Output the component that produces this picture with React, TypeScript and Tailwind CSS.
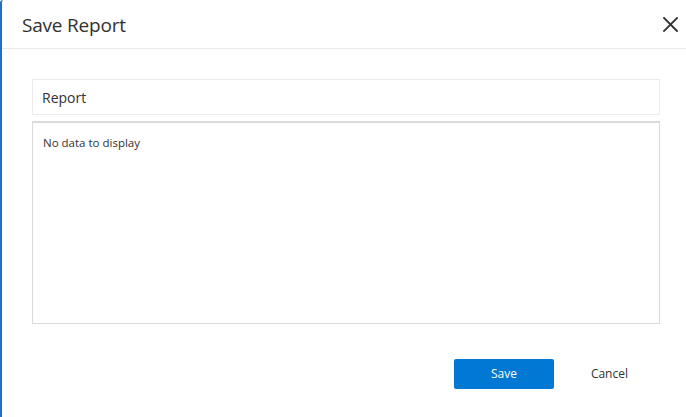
import React from 'react';

const font = { fontFamily: '"Open Sans", "Noto Sans", Arial, sans-serif' };

export default function App() {
  return (
    <div
      className="w-[686px] h-[417px] bg-white border-l-2 border-[#1f6fc4] rounded-tl-[3px] flex flex-col overflow-hidden text-[#323130]"
      style={font}
    >
      {/* Header */}
      <div className="h-[49px] shrink-0 border-b border-[#e9e9e9] flex items-center justify-between pl-[20px] pr-[8px]">
        <h1 className="text-[19px] leading-none font-normal tracking-[-0.2px] mt-[2px]">Save Report</h1>
        <button className="w-[16px] h-[16px] flex items-center justify-center text-[#323130]">
          <svg width="15" height="15" viewBox="0 0 15 15" fill="none" stroke="currentColor" strokeWidth="1.8" strokeLinecap="square">
            <path d="M1 1 L14 14 M14 1 L1 14" />
          </svg>
        </button>
      </div>

      {/* Body */}
      <div className="flex-1 flex flex-col pt-[30px] pl-[30px] pr-[26px]">
        <div className="h-[36px] border border-[#ebebeb] flex items-center px-[9px] text-[14px]">
          Report
        </div>
        <div className="mt-[6px] h-[203px] border border-[#dadada] border-t-2 px-[10px] pt-[11px] text-[11.5px]">
          No data to display
        </div>

        <div className="flex items-center justify-end mt-[35px] pr-[32px]">
          <button className="w-[100px] h-[30px] bg-[#0078d4] rounded-[2px] text-white text-[12px]">
            Save
          </button>
          <button className="ml-[37px] text-[12px] text-[#323130]">Cancel</button>
        </div>
      </div>
    </div>
  );
}
